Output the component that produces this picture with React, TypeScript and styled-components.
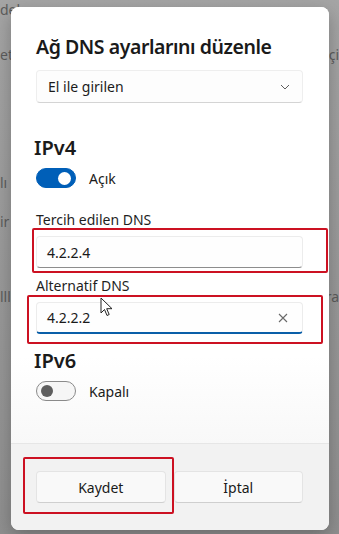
import React from 'react';
import styled, { createGlobalStyle } from 'styled-components';

const GlobalStyle = createGlobalStyle`
  html, body {
    margin: 0;
    padding: 0;
    width: 339px;
    height: 534px;
    overflow: hidden;
  }
  body {
    font-family: "Noto Sans", "Open Sans", sans-serif;
    color: #1b1b1b;
  }
`;

const Screen = styled.div`
  position: relative;
  width: 339px;
  height: 534px;
  overflow: hidden;
  background: linear-gradient(#a5a5a5, #989898 60%, #8f8f8f);
`;

const Backdrop = styled.div`
  display: flex;
  flex-direction: column;
  padding-top: 1px;
`;

const BackdropRow = styled.div<{ $mt: number }>`
  display: flex;
  justify-content: space-between;
  margin-top: ${p => p.$mt}px;
  height: 18px;
  font-size: 14px;
  line-height: 18px;
  color: #5c5c5c;
`;

const Dialog = styled.div`
  position: absolute;
  left: 11px;
  top: 7px;
  width: 318px;
  height: 523px;
  border-radius: 8px;
  overflow: hidden;
  display: flex;
  flex-direction: column;
  background: #fff;
  box-shadow: 0 6px 18px rgba(0, 0, 0, 0.25);
`;

const Body = styled.div`
  flex: 1;
  display: flex;
  flex-direction: column;
  padding: 26px 26px 0 25px;
  background: linear-gradient(#ffffff 80%, #f8f8f8);
`;

const Title = styled.h1`
  margin: 0;
  font-size: 19.5px;
  font-weight: 600;
  line-height: 28px;
  letter-spacing: -0.45px;
  color: #1a1a1a;
`;

const Select = styled.div`
  margin-top: 9px;
  height: 31px;
  display: flex;
  align-items: center;
  justify-content: space-between;
  padding: 0 12px 0 11px;
  background: #fdfdfd;
  border: 1px solid #eeeeee;
  border-bottom-color: #d4d4d4;
  border-radius: 4px;
  font-size: 14px;
`;

const Heading = styled.h2<{ $mt: number }>`
  margin: ${p => p.$mt}px 0 0 -2px;
  font-size: 20px;
  font-weight: 600;
  line-height: 28px;
  color: #1a1a1a;
`;

const ToggleRow = styled.div`
  margin-top: 6px;
  display: flex;
  align-items: center;
  gap: 13px;
  font-size: 14px;
  height: 20px;
`;

const Track = styled.div<{ $on: boolean }>`
  box-sizing: border-box;
  width: 40px;
  height: 20px;
  border-radius: 10px;
  display: flex;
  align-items: center;
  padding: 0 4px;
  justify-content: ${p => (p.$on ? 'flex-end' : 'flex-start')};
  background: ${p => (p.$on ? '#005fb8' : '#f6f6f6')};
  border: 1px solid ${p => (p.$on ? '#005fb8' : '#8a8a8a')};
`;

const Knob = styled.div<{ $on: boolean }>`
  width: ${p => (p.$on ? 13 : 12)}px;
  height: ${p => (p.$on ? 13 : 12)}px;
  border-radius: 50%;
  background: ${p => (p.$on ? '#ffffff' : '#5d5d5d')};
`;

const Label = styled.div<{ $mt: number }>`
  margin-top: ${p => p.$mt}px;
  font-size: 14px;
  line-height: 20px;
  color: #1f1f1f;
`;

const Input = styled.div<{ $focused?: boolean }>`
  box-sizing: border-box;
  margin-top: 6px;
  height: 32px;
  display: flex;
  align-items: center;
  justify-content: space-between;
  padding: 0 14px 0 10px;
  background: #fefefe;
  border: 1px solid #ececec;
  border-bottom: ${p => (p.$focused ? '2px solid #0a5fa8' : '1px solid #8d8d8d')};
  border-radius: 4px;
  font-size: 14px;
  color: #1a1a1a;
`;

const Footer = styled.div`
  height: 86px;
  flex-shrink: 0;
  display: grid;
  grid-template-columns: 1fr 1fr;
  gap: 8px;
  align-items: center;
  padding: 0 26px 0 25px;
  background: #f2f2f2;
  border-top: 1px solid #e6e6e6;
`;

const Button = styled.button`
  height: 32px;
  border: 1px solid #e4e4e4;
  border-bottom-color: #cfcfcf;
  border-radius: 4px;
  background: #f9f9f9;
  font-family: inherit;
  font-size: 14px;
  color: #1a1a1a;
`;

const Mark = styled.div<{ $x: number; $y: number; $w: number; $h: number }>`
  position: absolute;
  left: ${p => p.$x}px;
  top: ${p => p.$y}px;
  width: ${p => p.$w}px;
  height: ${p => p.$h}px;
  box-sizing: border-box;
  border: 2px solid #cc1122;
  border-radius: 2px;
  pointer-events: none;
`;

const Cursor = styled.svg`
  position: absolute;
  left: 100px;
  top: 297px;
`;

const Chevron = () => (
  <svg width="10" height="6" viewBox="0 0 10 6">
    <path d="M1 1l4 4 4-4" fill="none" stroke="#5e5e5e" strokeWidth="1" />
  </svg>
);

const Clear = () => (
  <svg width="10" height="10" viewBox="0 0 10 10">
    <path d="M1 1l8 8M9 1l-8 8" stroke="#6a6a6a" strokeWidth="1.1" />
  </svg>
);

const Toggle: React.FC<{ on: boolean; label: string }> = ({ on, label }) => (
  <ToggleRow>
    <Track $on={on}>
      <Knob $on={on} />
    </Track>
    <span>{label}</span>
  </ToggleRow>
);

export default function App() {
  return (
    <Screen>
      <GlobalStyle />
      <Backdrop>
        <BackdropRow $mt={0}>
          <span>dek</span>
          <span />
        </BackdropRow>
        <BackdropRow $mt={27}>
          <span>eti</span>
          <span>çi</span>
        </BackdropRow>
        <BackdropRow $mt={110}>
          <span>lı</span>
          <span />
        </BackdropRow>
        <BackdropRow $mt={21}>
          <span>ir</span>
          <span />
        </BackdropRow>
        <BackdropRow $mt={57}>
          <span>lll</span>
          <span>ra</span>
        </BackdropRow>
      </Backdrop>

      <Dialog>
        <Body>
          <Title>Ağ DNS ayarlarını düzenle</Title>
          <Select>
            <span>El ile girilen</span>
            <Chevron />
          </Select>

          <Heading $mt={31}>IPv4</Heading>
          <Toggle on label="Açık" />

          <Label $mt={22}>Tercih edilen DNS</Label>
          <Input>4.2.2.4</Input>

          <Label $mt={8}>Alternatif DNS</Label>
          <Input $focused>
            <span>4.2.2.2</span>
            <Clear />
          </Input>

          <Heading $mt={13}>IPv6</Heading>
          <Toggle on={false} label="Kapalı" />
        </Body>
        <Footer>
          <Button>Kaydet</Button>
          <Button>İptal</Button>
        </Footer>
      </Dialog>

      <Mark $x={32} $y={228} $w={296} $h={45} />
      <Mark $x={27} $y={295} $w={296} $h={49} />
      <Mark $x={23} $y={457} $w={151} $h={57} />

      <Cursor width="14" height="20" viewBox="0 0 14 20">
        <path
          d="M1 1v15l3.5-3.5 2.5 6 2.2-1-2.5-5.8H12z"
          fill="#fff"
          stroke="#222"
          strokeWidth="1"
          strokeLinejoin="round"
        />
      </Cursor>
    </Screen>
  );
}
